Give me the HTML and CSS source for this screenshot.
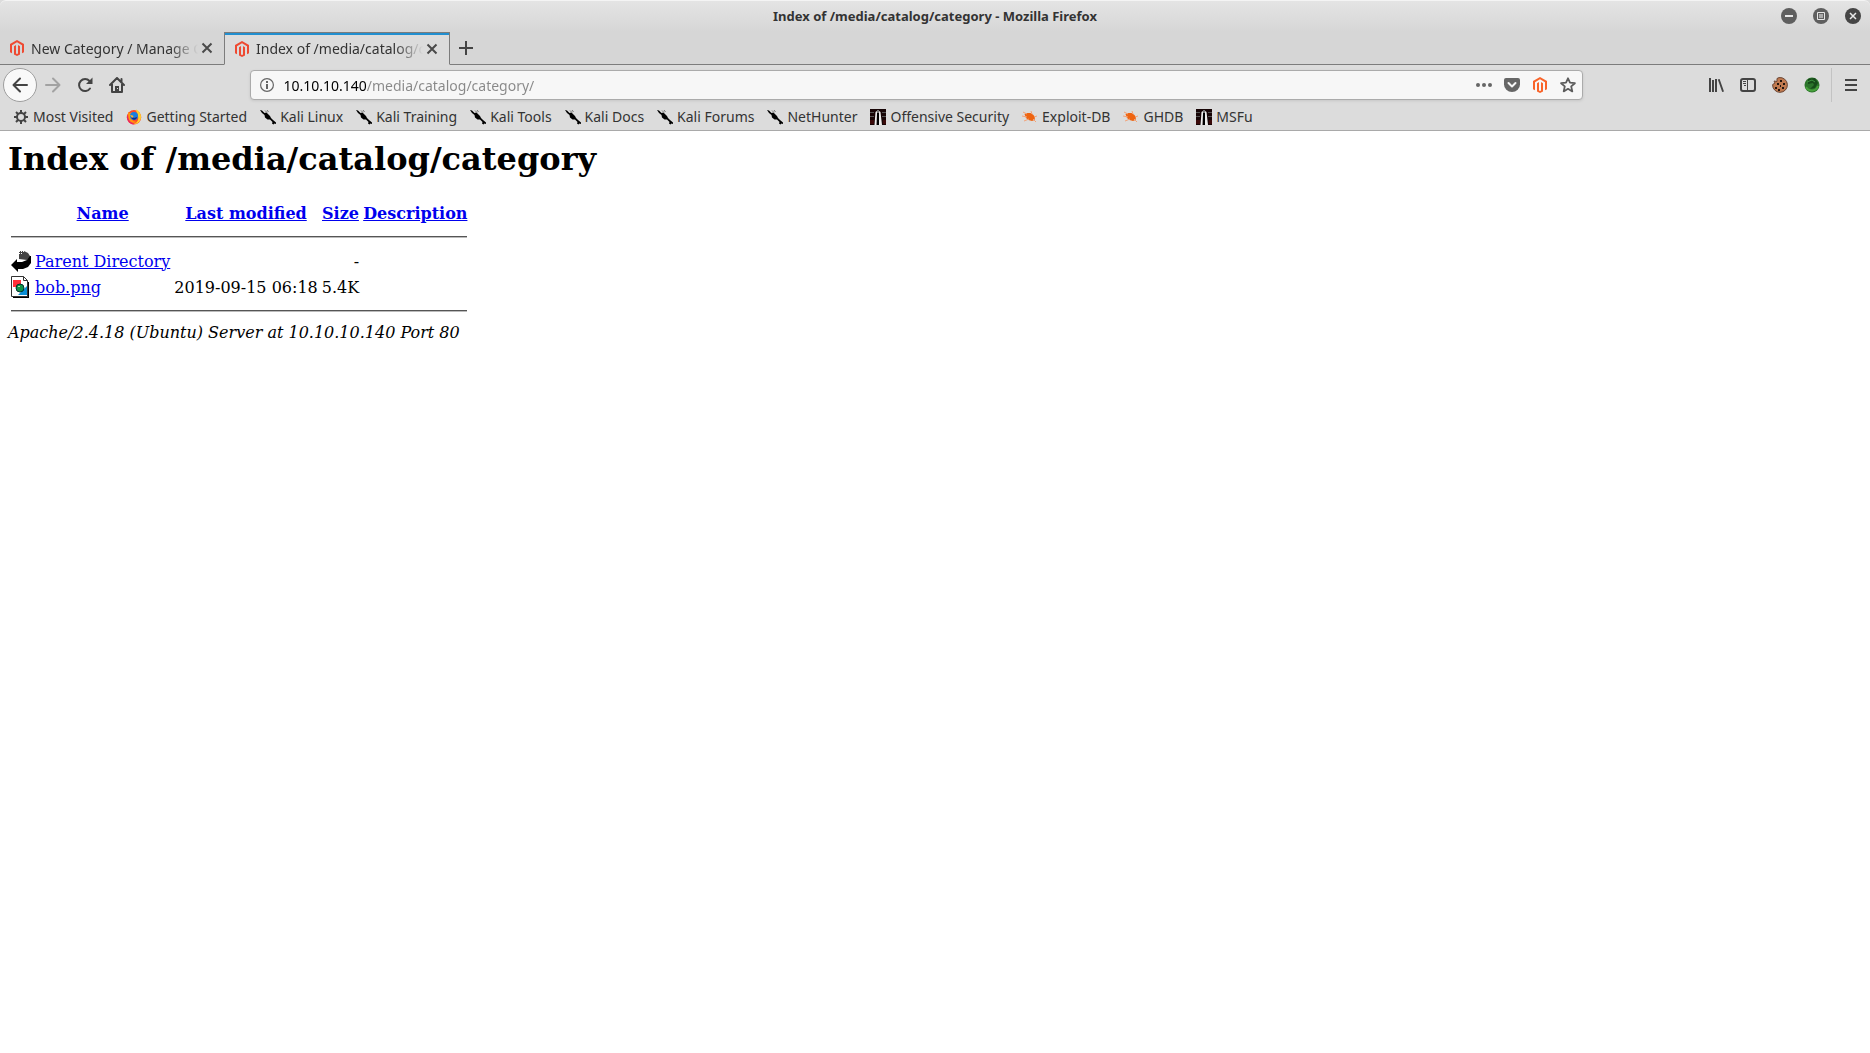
FILE: index.html
```html
<!DOCTYPE html>
<html lang="en">
<head>
  <meta charset="UTF-8">
  <title>Index of /media/catalog/category</title>
  <link rel="stylesheet" href="styles.css">
</head>
<body>

  <!-- Shared icons -->
  <svg class="sprite" width="0" height="0" aria-hidden="true">
    <symbol id="magento" viewBox="0 0 16 16">
      <path d="M8 0 1 4v8.2l2 1.1V5.2l5-2.9 5 2.9v8.1l2-1.1V4z"/>
      <path d="M5 6.2v8.2L8 16l3-1.6V6.2L9 5.1v8.3l-1 .6-1-.6V5.1z"/>
    </symbol>
    <symbol id="close" viewBox="0 0 12 12">
      <path d="M1.5 1.5l9 9m0-9l-9 9" fill="none" stroke="#4a4a4a" stroke-width="2"/>
    </symbol>
    <symbol id="kali" viewBox="0 0 16 16">
      <path d="M0 1l2 .5L4.500 4l2-.5L10 7l1 2 2 2 3 2.500v1.500l-1.500-.5-1 1-1.500-1 .5-1.500-2.500-2.500-2.500 0-2.500-2L4.500 6 2 4z"/>
      <path d="M5 1.500l2 2M7 1l1.500 2" stroke="#777" stroke-width="1"/>
    </symbol>
    <symbol id="offsec" viewBox="0 0 16 16">
      <path fill="#170506" d="M0 0h16v16H0z"/>
      <path fill="#555" d="M0 3h4v1H0zM0 7h4v1H0zM12 3h4v1h-4zM12 7h4v1h-4z"/>
      <path fill="#3b0a0a" d="M0 11h4v4H0zM13 11h3v4h-3z"/>
      <path fill="#eee" d="M5.500 3 7 2v3l-.5 11H4.500zM9 2l1.500 1 1.500 13H9z"/>
      <path fill="#777" d="M7 1h2v3H7z"/>
      <path fill="#000" d="M7 4h2v12H7z"/>
    </symbol>
    <symbol id="spider" viewBox="0 0 16 16">
      <path fill="#ee6411" d="M2.500 5l3-1 3 0 3 2 1.500 2.500-.5 2.500-2.500 1-3.500-1L4 9z"/>
      <path fill="none" stroke="#f3a277" stroke-width="1" d="M1 3l4 2M0 7l5 1M2 12l5-2M9 2l1 3M12 8l3-1M11 10l3 3"/>
    </symbol>
  </svg>

  <header class="browser">
    <div class="titlebar">
      <span class="window-title">Index of /media/catalog/category - Mozilla Firefox</span>
      <div class="window-buttons">
        <button aria-label="Minimize"><svg width="16" height="16" viewBox="0 0 16 16"><circle cx="8" cy="8" r="8" fill="#5f5f5f"/><path fill="#e8e8e8" d="M4 7h8v2H4z"/></svg></button>
        <button aria-label="Maximize"><svg width="16" height="16" viewBox="0 0 16 16"><circle cx="8" cy="8" r="8" fill="#5f5f5f"/><path fill="none" stroke="#e8e8e8" d="M4.500 4.500h7v7h-7z"/><path fill="#aaa" d="M6 6h4v4H6z"/></svg></button>
        <button aria-label="Close window"><svg width="16" height="16" viewBox="0 0 16 16"><circle cx="8" cy="8" r="8" fill="#454545"/><path stroke="#e8e8e8" stroke-width="1.500" d="M5 5l6 6m0-6l-6 6"/></svg></button>
      </div>
    </div>

    <div class="tabs">
      <div class="tab">
        <svg class="tab-icon" width="16" height="16"><use href="#magento"/></svg>
        <span class="tab-title">New Category / Manage Categories</span>
        <button aria-label="Close tab"><svg width="12" height="12"><use href="#close"/></svg></button>
      </div>
      <div class="tab active">
        <svg class="tab-icon" width="16" height="16"><use href="#magento"/></svg>
        <span class="tab-title">Index of /media/catalog/category</span>
        <button aria-label="Close tab"><svg width="12" height="12"><use href="#close"/></svg></button>
      </div>
      <div class="tab-rest">
        <button aria-label="New tab"><svg width="14" height="14" viewBox="0 0 14 14"><path fill="#444" d="M6 0h2v6h6v2H8v6H6V8H0V6h6z"/></svg></button>
      </div>
    </div>

    <div class="toolbar">
      <button class="back" aria-label="Back"><svg width="16" height="16" viewBox="0 0 16 16"><path d="M15 8H2M8 1.500L1.500 8 8 14.500" fill="none" stroke="#444" stroke-width="2" stroke-linecap="round" stroke-linejoin="round"/></svg></button>
      <button class="tool" aria-label="Forward" disabled><svg width="16" height="16" viewBox="0 0 16 16"><path d="M1 8h13M8 1.500L14.500 8 8 14.500" fill="none" stroke="#a2a2a2" stroke-width="2" stroke-linecap="round" stroke-linejoin="round"/></svg></button>
      <button class="tool" aria-label="Reload"><svg width="16" height="16" viewBox="0 0 16 16"><path d="M13 11.500A6 6 0 1 1 12.500 4" fill="none" stroke="#444" stroke-width="2" stroke-linecap="round"/><path fill="#444" d="M15.500.5V7H9z"/></svg></button>
      <button class="tool" aria-label="Home"><svg width="16" height="16" viewBox="0 0 16 16"><path d="M1 8l7-7 7 7M3 7v8h10V7M12.500 2v3" fill="none" stroke="#444" stroke-width="2" stroke-linecap="round" stroke-linejoin="round"/><path fill="#444" d="M6 9h4v6H6z"/><path fill="#dcdcdc" d="M8 11h1v1H8z"/></svg></button>

      <div class="spacer"></div>
      <div class="urlbar">
        <svg width="14" height="14" viewBox="0 0 14 14"><circle cx="7" cy="7" r="6.400" fill="none" stroke="#666" stroke-width="1.200"/><path fill="#666" d="M6 3h2v2H6zM6 6h2v5H6z"/></svg>
        <input class="url" type="text" aria-label="Address" value="10.10.10.140/media/catalog/category/">
        <button aria-label="Page actions"><svg width="16" height="16" viewBox="0 0 16 16" fill="#666"><circle cx="2" cy="8" r="2"/><circle cx="8" cy="8" r="2"/><circle cx="14" cy="8" r="2"/></svg></button>
        <button aria-label="Save to Pocket"><svg width="16" height="16" viewBox="0 0 16 16"><path fill="#666" d="M2 1h12a2 2 0 0 1 2 2v4.500a8 7.500 0 0 1-16 0V3a2 2 0 0 1 2-2z"/><path d="M4.500 6L8 9.500 11.500 6" fill="none" stroke="#f7f7f7" stroke-width="2" stroke-linecap="round" stroke-linejoin="round"/></svg></button>
        <button aria-label="Magento"><svg width="16" height="16" fill="#f9642a"><use href="#magento"/></svg></button>
        <button aria-label="Bookmark this page"><svg width="16" height="16" viewBox="0 0 16 16"><path d="M8 1.300l2 4.400 4.900.5-3.700 3.200 1.100 5L8 11.800l-4.300 2.600 1.100-5L1.100 6.200 6 5.700z" fill="none" stroke="#5c5c5c" stroke-width="1.800" stroke-linejoin="round"/></svg></button>
      </div>
      <div class="spacer"></div>

      <button class="tool" aria-label="Library"><svg width="16" height="16" viewBox="0 0 16 16"><path fill="#444" d="M1 1h2v14H1zM4 3h2v12H4zM7 2h2v13H7zM9.800 2.600l1.800-.7 4.400 12.500-1.800.6z"/></svg></button>
      <button class="tool" aria-label="Sidebars"><svg width="16" height="16" viewBox="0 0 16 16"><rect x="1" y="2" width="14" height="12" rx="2" fill="none" stroke="#444" stroke-width="2"/><path fill="#444" d="M7 2h1v12H7zM3 4h3v1H3zM3 6h3v1H3zM4 8h2v1H4z"/></svg></button>
      <button class="tool" aria-label="Cookie manager"><svg width="16" height="16" viewBox="0 0 16 16"><path fill="#c07a50" stroke="#6b4634" d="M7 .6a7.400 7.400 0 1 1-6.400 7L3 6 2 4l3 .5L5 1.500z"/><path fill="#22150f" d="M8 3h2v2H8zM5 6h2v2H5zM11 6h2v2h-2zM8 8h1v2H8zM3 10h2v2H3zM10 10h2v2h-2zM6 12h2v2H6z"/></svg></button>
      <button class="tool" aria-label="Proxy"><svg width="16" height="16" viewBox="0 0 16 16"><circle cx="8" cy="8" r="7.500" fill="#2c742b"/><path d="M2 10a6.500 6.500 0 0 0 12-1" fill="none" stroke="#48a13c" stroke-width="2"/><path fill="#174b1a" d="M4 2l7-1 3 5-3 5-5 1 4-4-1-2-5 1z"/><path d="M3 5l5-2 3 2" fill="none" stroke="#3e9440"/></svg></button>
      <div class="divider"></div>
      <button class="tool menu" aria-label="Open menu"><svg width="12" height="12" viewBox="0 0 12 12"><path fill="#444" d="M0 0h12v2H0zM0 5h12v2H0zM0 10h12v2H0z"/></svg></button>
    </div>

    <nav class="bookmarks">
      <a href="#"><svg width="16" height="16" viewBox="0 0 16 16"><circle cx="8" cy="8" r="4" fill="none" stroke="#444" stroke-width="2"/><path d="M8 1v3M8 12v3M1 8h3M12 8h3M3 3l2 2M11 11l2 2M13 3l-2 2M5 11l-2 2" stroke="#444" stroke-width="2"/></svg>Most Visited</a>
      <a href="#"><svg width="16" height="16" viewBox="0 0 16 16"><circle cx="8" cy="8.300" r="7.200" fill="#ff4a28"/><path fill="#e9226a" d="M1 6c-.5 5 2 9 7 9.600L3 10z"/><path fill="#ffd22d" d="M10 .5c4 2 6 6 4.600 10-1 3-4 5-7 4.500C11 14 13 11 12 7 11.500 4 10 3 10 .5z"/><path fill="#ff980e" d="M2 3l1.500 1L6 3.500 5 7l2 5 4 1c-4 2-8 0-8.500-4z"/><circle cx="8" cy="7" r="4" fill="#1a7fe0"/><path fill="#1b2a80" d="M5 8l3 1 3-1c0 3-5 4-6 0z"/><path fill="#ffb02e" d="M4 6l3 .5.5 1L6 9z"/></svg>Getting Started</a>
      <a href="#"><svg width="16" height="16"><use href="#kali"/></svg>Kali Linux</a>
      <a href="#"><svg width="16" height="16"><use href="#kali"/></svg>Kali Training</a>
      <a href="#"><svg width="16" height="16"><use href="#kali"/></svg>Kali Tools</a>
      <a href="#"><svg width="16" height="16"><use href="#kali"/></svg>Kali Docs</a>
      <a href="#"><svg width="16" height="16"><use href="#kali"/></svg>Kali Forums</a>
      <a href="#"><svg width="16" height="16"><use href="#kali"/></svg>NetHunter</a>
      <a href="#"><svg width="16" height="16"><use href="#offsec"/></svg>Offensive Security</a>
      <a href="#"><svg width="16" height="16"><use href="#spider"/></svg>Exploit-DB</a>
      <a href="#"><svg width="16" height="16"><use href="#spider"/></svg>GHDB</a>
      <a href="#"><svg width="16" height="16"><use href="#offsec"/></svg>MSFu</a>
    </nav>
  </header>

  <main class="page">
    <h1>Index of /media/catalog/category</h1>
    <table>
      <tr>
        <th></th>
        <th><a href="#">Name</a></th>
        <th><a href="#">Last modified</a></th>
        <th><a href="#">Size</a></th>
        <th><a href="#">Description</a></th>
      </tr>
      <tr><td colspan="5"><hr></td></tr>
      <tr>
        <td><svg width="20" height="22" viewBox="0 0 20 22"><path fill="#444" d="M8 1h5l4 2 2 3v3l-3 1-8-1z"/><path stroke="#fff" stroke-width="1" stroke-dasharray="1 1" d="M8 1.500h5M8 3.500h3"/><path fill="#000" d="M20 6v7l-3 4-5 2H7v3l-7-7 6-6v3h5l5-2 3-4z"/></svg></td>
        <td><a href="#">Parent Directory</a></td>
        <td></td>
        <td class="right">-</td>
        <td></td>
      </tr>
      <tr>
        <td><svg width="18" height="22" viewBox="0 0 18 22"><path fill="#000" d="M2 20h15V6h1v16H2z"/><path fill="#fff" stroke="#333" d="M.5.5h12l4 4v16H.5z"/><path fill="none" stroke="#333" d="M12.500.5v4h4"/><path fill="#ff3038" d="M2 4h8v7H2z"/><path fill="#0a8fd6" d="M16 10v9H7z"/><circle cx="9" cy="12" r="4" fill="#129447" stroke="#033"/><path fill="#9fe0b0" d="M7 10h2v1H7z"/></svg></td>
        <td><a href="#">bob.png</a></td>
        <td class="right">2019-09-15 06:18</td>
        <td class="right">5.4K</td>
        <td></td>
      </tr>
      <tr><td colspan="5"><hr></td></tr>
    </table>
    <address>Apache/2.4.18 (Ubuntu) Server at 10.10.10.140 Port 80</address>
  </main>

</body>
</html>
```

FILE: styles.css
```css
* {
  box-sizing: border-box;
}
body {
  margin: 0;
  background: #fff;
}
svg {
  display: block;
  flex: none;
}
.sprite {
  position: absolute;
}

/* Browser window */
.browser {
  font-family: "Noto Sans", sans-serif;
  font-size: 14px;
  color: #333;
  background: #dcdcdc;
  border-bottom: 1px solid #a9a9a9;
}
.browser button {
  display: flex;
  align-items: center;
  justify-content: center;
  padding: 0;
  border: 0;
  background: none;
}
.titlebar {
  display: grid;
  grid-template-columns: 1fr auto 1fr;
  align-items: center;
  height: 32px;
  border-top: 1px solid #f4f4f4;
  border-radius: 6px 6px 0 0;
  background: linear-gradient(#e4e4e4, #d6d6d6);
}
.window-title {
  grid-column: 2;
  padding-bottom: 2px;
  font-weight: bold;
  font-size: 13px;
}
.window-buttons {
  display: flex;
  justify-content: flex-end;
  gap: 16px;
  padding: 0 9px 1px 0;
}

.tabs {
  display: flex;
  height: 33px;
  background: #d6d6d6;
}
.tab {
  display: flex;
  align-items: center;
  width: 224px;
  padding: 0 11px 0 9px;
  border-bottom: 1px solid #7c7c7c;
}
.tab.active {
  width: 226px;
  border: 1px solid #7c7c7c;
  border-bottom-color: #dcdcdc;
  background: #dcdcdc;
  box-shadow: inset 0 2px #218fd0;
}
.tab-icon {
  fill: #ee4a32;
}
.tab-title {
  flex: 1;
  min-width: 0;
  margin: 0 3px 0 6px;
  overflow: hidden;
  white-space: nowrap;
  mask-image: linear-gradient(to left, transparent, #000 28px);
}
.tab-rest {
  flex: 1;
  display: flex;
  align-items: center;
  padding-left: 9px;
  border-bottom: 1px solid #7c7c7c;
}

.toolbar {
  display: flex;
  align-items: center;
  height: 40px;
  padding: 0 3px;
}
.toolbar .back {
  width: 34px;
  height: 34px;
  border: 1px solid #9e9e9e;
  border-radius: 50%;
  background: #f9f9f9;
}
.tool {
  width: 32px;
  height: 32px;
}
.spacer {
  flex: 119;
}
.urlbar {
  flex: 1333;
  display: flex;
  align-items: center;
  gap: 12px;
  height: 30px;
  padding: 0 6px 0 9px;
  border: 1px solid #ababab;
  border-radius: 4px;
  background: #f7f7f7;
  box-shadow: 0 1px 3px rgba(0,0,0,0.1);
}
.url {
  flex: 1;
  min-width: 0;
  height: 24px;
  padding: 0;
  margin-left: -3px;
  border: 0;
  outline: 0;
  font: inherit;
  /* host in black, path in grey */
  background: linear-gradient(to right, #000 83px, #888 83px);
  background-clip: text;
  color: transparent;
}
.divider {
  width: 1px;
  height: 34px;
  margin: 0 3px;
  background: #c3c3c3;
}

.bookmarks {
  display: flex;
  gap: 13px;
  height: 25px;
  padding: 0 13px;
}
.bookmarks a {
  display: flex;
  align-items: center;
  gap: 4px;
  height: 23px;
  color: #333;
  text-decoration: none;
  white-space: nowrap;
}

/* Directory listing */
.page {
  padding: 9px 8px;
  font-family: "DejaVu Serif", serif;
  font-size: 16px;
  color: #000;
}
.page h1 {
  margin: 0 0 23px;
  font-size: 32px;
  line-height: 38px;
}
.page a {
  color: #0000ee;
}
.page table {
  border-spacing: 2px;
}
.page th, .page td {
  padding: 1px;
  line-height: 19px;
}
.page th {
  line-height: 20px;
}
.page .right {
  text-align: right;
}
.page hr {
  margin: 8px 0;
  border: 0;
  border-top: 1px solid #555;
  border-bottom: 1px solid #bbb;
}
```
